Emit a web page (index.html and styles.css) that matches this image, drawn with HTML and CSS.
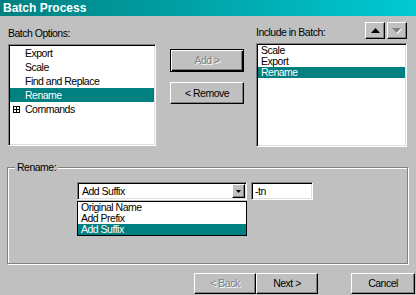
FILE: index.html
```html
<!DOCTYPE html>
<html>
<head>
<meta charset="utf-8">
<link rel="stylesheet" href="styles.css">
</head>
<body>
<div class="titlebar">Batch Process</div>
<div class="top">
  <div class="col-left">
    <div class="label">Batch Options:</div>
    <div class="listbox list-left">
      <div class="item">Export</div>
      <div class="item">Scale</div>
      <div class="item">Find and Replace</div>
      <div class="item sel">Rename</div>
      <div class="item expand"><svg class="plus" width="7" height="7" viewBox="0 0 7 7"><rect x="0.5" y="0.5" width="6" height="6" fill="#fff" stroke="#000"/><path d="M1 3.5H6M3.5 1V6" stroke="#000"/></svg>Commands</div>
    </div>
  </div>
  <div class="col-mid">
    <div class="btn btn-default disabled add">Add &gt;</div>
    <div class="btn remove">&lt; Remove</div>
  </div>
  <div class="col-right">
    <div class="right-head">
      <div class="label">Include in Batch:</div>
      <div class="arrows">
        <div class="btn arrow"><svg width="9" height="5" viewBox="0 0 9 5"><path d="M4.5 0L9 5H0Z" fill="#000"/></svg></div>
        <div class="btn arrow"><svg width="10" height="6" viewBox="0 0 10 6"><path d="M1 1H10L5.5 6Z" fill="#fff"/><path d="M0 0H9L4.5 5Z" fill="#808080"/></svg></div>
      </div>
    </div>
    <div class="listbox list-right">
      <div class="item">Scale</div>
      <div class="item">Export</div>
      <div class="item sel">Rename</div>
    </div>
  </div>
</div>
<fieldset class="group">
  <legend>Rename:</legend>
  <div class="group-body">
    <div class="row">
      <div class="combo">
        <span class="combo-text">Add Suffix</span>
        <span class="btn combo-btn"><svg width="5" height="3" viewBox="0 0 5 3"><path d="M0 0H5L2.5 3Z" fill="#000"/></svg></span>
      </div>
      <div class="field">-tn</div>
      <div class="dropdown">
        <div class="ditem">Original Name</div>
        <div class="ditem">Add Prefix</div>
        <div class="ditem sel">Add Suffix</div>
      </div>
    </div>
  </div>
</fieldset>
<div class="footer">
  <div class="btn disabled back">&lt; Back</div>
  <div class="btn next">Next &gt;</div>
  <div class="btn cancel">Cancel</div>
</div>
</body>
</html>
```
FILE: styles.css
```css
* { box-sizing: border-box; }
body {
  margin: 0;
  width: 416px;
  height: 295px;
  overflow: hidden;
  background: #c0c0c0;
  color: #000;
  font-family: "Liberation Sans", Arial, sans-serif;
  font-size: 10.5px;
  letter-spacing: -0.5px;
  line-height: 13px;
}
.titlebar {
  height: 16px;
  background: linear-gradient(to right, #008080, #00cad4);
  color: #fff;
  font: bold 12px/16px "Liberation Sans", Arial, sans-serif;
  letter-spacing: 0;
  padding-left: 3px;
}
.top { display: flex; height: 131px; }
.label { height: 13px; white-space: nowrap; }
.col-left { margin-left: 8px; width: 148px; padding-top: 11px; }
.col-left .label { margin-bottom: 4px; }
.listbox {
  background: #fff;
  border: 1px solid;
  border-color: #808080 #fff #fff #808080;
  box-shadow: inset 1px 1px 0 #000, inset -1px -1px 0 #dfdfdf;
  padding: 1px;
}
.list-left { height: 102px; }
.list-left .item { height: 14px; line-height: 14px; padding-left: 15px; white-space: nowrap; position: relative; }
.list-right { height: 104px; }
.list-right .item { height: 11px; line-height: 11px; padding-left: 3px; }
.sel { background: #008080; color: #fff; }
.expand { display: flex; align-items: center; }
.plus { position: absolute; left: 3px; top: 4px; }
.col-mid {
  margin-left: 14px;
  width: 74px;
  padding-top: 33px;
  display: flex;
  flex-direction: column;
  gap: 10px;
}
.btn {
  background: #c0c0c0;
  border: 1px solid;
  border-color: #fff #000 #000 #fff;
  box-shadow: inset -1px -1px 0 #808080;
  display: flex;
  align-items: center;
  justify-content: center;
  white-space: nowrap;
}
.btn-default {
  border-color: #000;
  box-shadow: inset 1px 1px 0 #fff, inset -1px -1px 0 #000, inset -2px -2px 0 #808080;
}
.disabled { color: #808080; text-shadow: 1px 1px 0 #fff; }
.add { height: 23px; }
.remove { height: 22px; }
.col-right { margin-left: 12px; width: 151px; padding-top: 6px; }
.right-head { display: flex; align-items: flex-end; height: 17px; margin-bottom: 4px; }
.arrows { margin-left: auto; display: flex; gap: 2px; align-self: stretch; }
.arrow { width: 20px; height: 17px; }
.group {
  margin: 14px 8px 0 7px;
  padding: 0;
  min-width: 0;
  border: 1px solid #808080;
  box-shadow: inset 1px 1px 0 #fff, 1px 1px 0 #fff;
}
.group legend {
  padding: 0 2px;
  margin-left: 7px;
  background: #c0c0c0;
  line-height: 13px;
}
.group-body { height: 89px; padding: 8px 0 0 69px; }
.row { display: flex; gap: 4px; position: relative; }
.combo {
  width: 170px;
  height: 18px;
  background: #fff;
  border: 1px solid;
  border-color: #808080 #fff #fff #808080;
  box-shadow: inset 1px 1px 0 #000, inset -1px -1px 0 #dfdfdf;
  padding: 1px;
  display: flex;
}
.combo-text { flex: 1; line-height: 15px; padding-left: 3px; }
.combo-btn { width: 13px; height: 14px; }
.field {
  width: 62px;
  height: 18px;
  background: #fff;
  border: 1px solid;
  border-color: #808080 #fff #fff #808080;
  box-shadow: inset 1px 1px 0 #000, inset -1px -1px 0 #dfdfdf;
  padding: 1px 0 0 3px;
  line-height: 15px;
}
.dropdown {
  position: absolute;
  top: 19px;
  left: 0;
  width: 170px;
  background: #fff;
  border: 1px solid #000;
}
.ditem { height: 11px; line-height: 11px; padding-left: 3px; }
.footer {
  display: flex;
  justify-content: flex-end;
  margin-top: 9px;
  padding-right: 1px;
}
.footer .btn { height: 21px; }
.back, .next { width: 62px; }
.cancel { width: 64px; margin-left: 33px; }
```
